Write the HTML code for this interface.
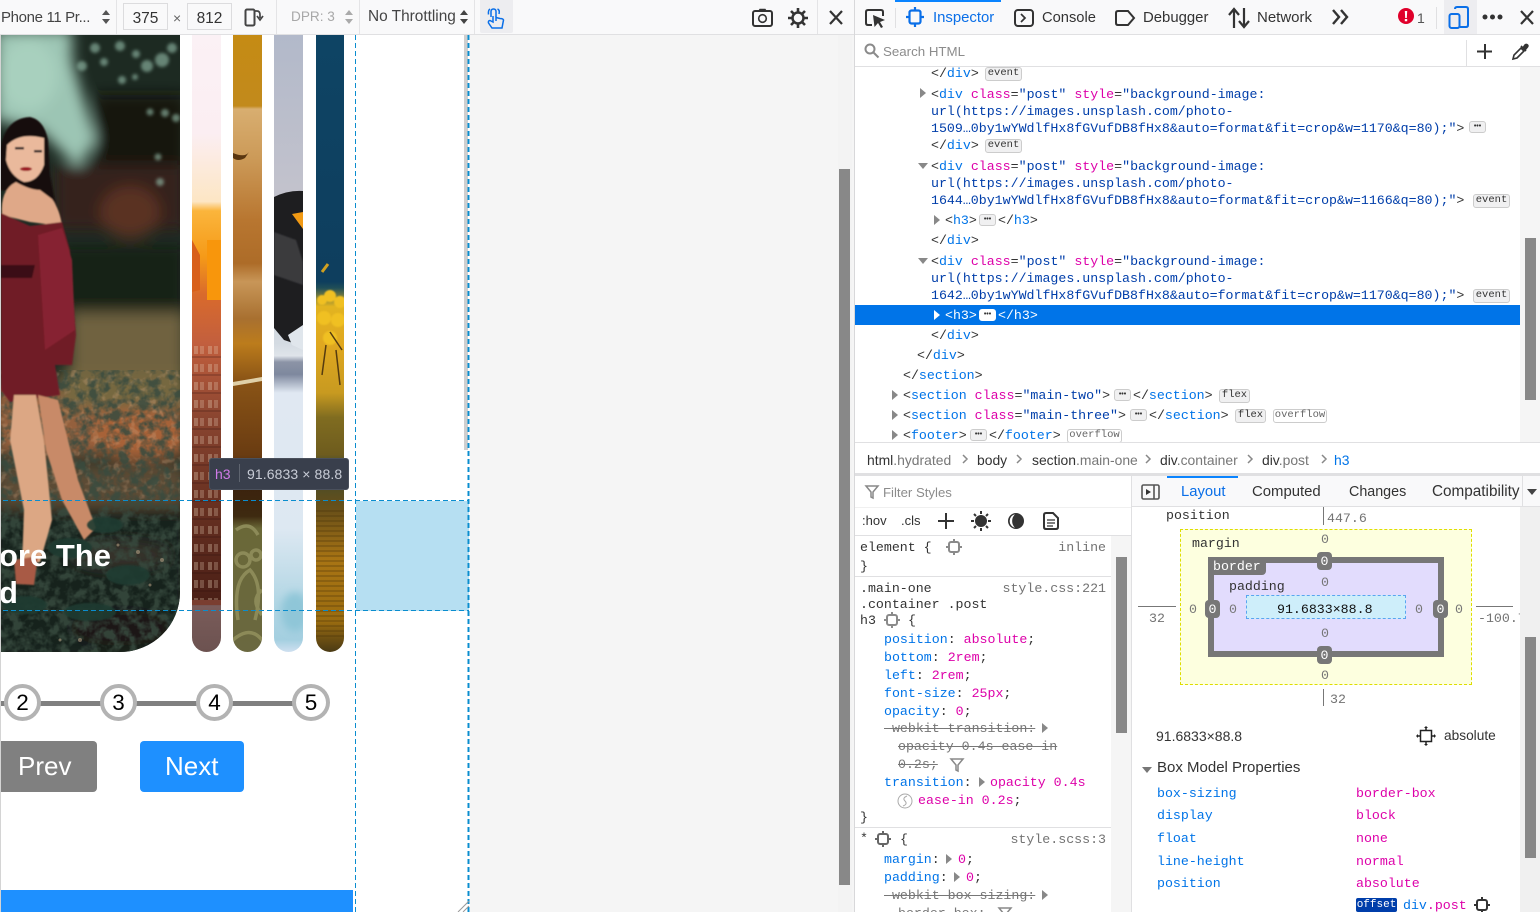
<!DOCTYPE html>
<html lang="en"><head><meta charset="utf-8"><title>Responsive Design Mode</title>
<style>
html,body{margin:0;padding:0;width:1540px;height:912px;overflow:hidden;background:#f5f5f5;font-family:"Liberation Sans",sans-serif;color:#222}
#root{position:absolute;left:0;top:0;width:1540px;height:912px;overflow:hidden;background:#f5f5f5}
.a{position:absolute}
.t{position:absolute;white-space:pre;font-family:"Liberation Sans",sans-serif;font-size:14.5px;line-height:20px;color:#333}
.m{position:absolute;white-space:pre;font-family:"Liberation Mono",monospace;font-size:13.28px;line-height:18px;color:#333;margin-top:1px}
.b{color:#0074e8}.p{color:#dd00a9}.d{color:#003eaa}.g{color:#737373}
.s{text-decoration:line-through;color:#777}
.bd{position:absolute;box-sizing:border-box;height:14px;border:1px solid #ccc;border-radius:3px;background:#f0f0f1;font:10.5px/11px "Liberation Mono",monospace;color:#333;text-align:center;white-space:pre;margin-top:1px}
.ov{background:#fff}
.el{width:17px;font:bold 7px/10px "Liberation Sans",sans-serif;letter-spacing:0;margin-top:0}
.z{position:absolute;width:16px;text-align:center;font:13.28px/16px "Liberation Mono",monospace;color:#777;margin-top:1px}
.bg0{position:absolute;width:15px;height:18px;border-radius:4px;background:#777;color:#fff;text-align:center;font:13.28px/19px "Liberation Mono",monospace}
svg{position:absolute;overflow:visible}
</style></head><body><div id="root">

<!-- LEFT: RDM viewport -->
<div class="a" style="left:0;top:0;width:854px;height:35px;background:#f9f9fa;border-bottom:1px solid #e0e0e2;box-sizing:border-box"></div>
<div class="a" style="left:0;top:35px;width:1px;height:877px;background:#d4d4d4"></div>
<div class="a" style="left:1px;top:35px;width:469px;height:877px;background:#fff"></div>

<!-- Photos -->
<svg width="470" height="912" viewBox="0 0 470 912" style="left:0;top:0">
<defs>
<filter id="f8" x="-30%" y="-30%" width="160%" height="160%"><feGaussianBlur stdDeviation="7"/></filter>
<filter id="f4" x="-30%" y="-30%" width="160%" height="160%"><feGaussianBlur stdDeviation="4"/></filter>
<filter id="f2" x="-50%" y="-50%" width="200%" height="200%"><feGaussianBlur stdDeviation="1.500"/></filter>
<filter id="f1" x="-30%" y="-30%" width="160%" height="160%"><feGaussianBlur stdDeviation=".8"/></filter>
<filter id="nd" x="0" y="0" width="100%" height="100%"><feTurbulence type="fractalNoise" baseFrequency=".1" numOctaves="3" seed="4"/><feColorMatrix values="0 0 0 0 .04  0 0 0 0 .07  0 0 0 0 .05  2.400 2.400 0 0 -2"/></filter>
<filter id="nl" x="0" y="0" width="100%" height="100%"><feTurbulence type="fractalNoise" baseFrequency=".14" numOctaves="2" seed="9"/><feColorMatrix values="0 0 0 0 .62  0 0 0 0 .38  0 0 0 0 .22  3 3 0 0 -3"/></filter>
<clipPath id="c0"><path d="M1 35H180V592A60 60 0 0 1 120 652H1Z"/></clipPath>
<clipPath id="c1"><path d="M192 35H221V637.500A14.500 14.500 0 0 1 192 637.500Z"/></clipPath>
<clipPath id="c2"><path d="M233 35H262V637.500A14.500 14.500 0 0 1 233 637.500Z"/></clipPath>
<clipPath id="c3"><path d="M274 35H303V637.500A14.500 14.500 0 0 1 274 637.500Z"/></clipPath>
<clipPath id="c4"><path d="M316 35H344V638A14 14 0 0 1 316 638Z"/></clipPath>
<linearGradient id="g1" x1="0" y1="0" x2="0" y2="1">
<stop offset="0" stop-color="#fbf1f5"/><stop offset=".16" stop-color="#fbeef2"/><stop offset=".27" stop-color="#fde6c4"/><stop offset=".285" stop-color="#fbb53c"/><stop offset=".36" stop-color="#f59a18"/><stop offset=".42" stop-color="#d96a2c"/><stop offset=".5" stop-color="#c25f3e"/><stop offset=".62" stop-color="#8a4530"/><stop offset=".75" stop-color="#6a3222"/><stop offset=".92" stop-color="#4a1f16"/><stop offset=".925" stop-color="#7a5c5a"/><stop offset="1" stop-color="#6c5250"/></linearGradient>
<linearGradient id="g2" x1="0" y1="0" x2="0" y2="1">
<stop offset="0" stop-color="#c58b14"/><stop offset=".115" stop-color="#c28a1c"/><stop offset=".12" stop-color="#d8ae70"/><stop offset=".2" stop-color="#cc9a58"/><stop offset=".3" stop-color="#b87630"/><stop offset=".37" stop-color="#ad6c28"/><stop offset=".4" stop-color="#c89658"/><stop offset=".46" stop-color="#a87030"/><stop offset=".5" stop-color="#bc7c1c"/><stop offset=".56" stop-color="#8a5416"/><stop offset=".68" stop-color="#6a3c12"/><stop offset=".72" stop-color="#3a200c"/><stop offset=".78" stop-color="#3e2a10"/><stop offset=".8" stop-color="#6a6838"/><stop offset="1" stop-color="#6a6840"/></linearGradient>
<linearGradient id="g3" x1="0" y1="0" x2="0" y2="1">
<stop offset="0" stop-color="#b2b9ca"/><stop offset=".25" stop-color="#c2c2cc"/><stop offset=".5" stop-color="#d4dbe2"/><stop offset=".52" stop-color="#dfe4ea"/><stop offset=".53" stop-color="#8c94a6"/><stop offset=".55" stop-color="#7e889e"/><stop offset=".58" stop-color="#e0e8f2"/><stop offset=".8" stop-color="#dde8f2"/><stop offset=".92" stop-color="#b2d6e4"/><stop offset=".98" stop-color="#a4cfe0"/><stop offset="1" stop-color="#cfe0f0"/></linearGradient>
<linearGradient id="g4" x1="0" y1="0" x2="0" y2="1">
<stop offset="0" stop-color="#0e4464"/><stop offset=".4" stop-color="#0e3e5e"/><stop offset=".41" stop-color="#204e58"/><stop offset=".44" stop-color="#e2b420"/><stop offset=".5" stop-color="#e0a820"/><stop offset=".58" stop-color="#c89a20"/><stop offset=".62" stop-color="#806c20"/><stop offset=".68" stop-color="#6e5c1e"/><stop offset=".7" stop-color="#3c4a30"/><stop offset=".77" stop-color="#6a5018"/><stop offset=".85" stop-color="#a87414"/><stop offset=".95" stop-color="#9a6c10"/><stop offset="1" stop-color="#4a3a14"/></linearGradient>
<pattern id="win" x="192" y="0" width="14" height="18" patternUnits="userSpaceOnUse"><rect x="2" y="4" width="4" height="8" fill="#e8d0b8" fill-opacity=".32"/><rect x="8" y="4" width="4" height="8" fill="#e8d0b8" fill-opacity=".26"/><rect x="0" y="14" width="14" height="2" fill="#2a0c08" fill-opacity=".2"/></pattern>
<pattern id="rip" width="28" height="5" patternUnits="userSpaceOnUse"><rect width="28" height="2" fill="#3e2c08" fill-opacity=".25"/></pattern>
</defs>

<g clip-path="url(#c0)">
<rect x="1" y="35" width="180" height="617" fill="#1d2a22"/>
<g filter="url(#f8)">
<path d="M-5 30H72V60L82 95L96 140L78 168L40 130L-5 120Z" fill="#9cc5b4"/>
<ellipse cx="28" cy="75" rx="30" ry="36" fill="#a8d0be"/>
<rect x="95" y="95" width="90" height="70" fill="#121210"/>
<rect x="55" y="165" width="130" height="65" fill="#35201a"/>
<ellipse cx="130" cy="212" rx="30" ry="26" fill="#5a3020"/>
<rect x="60" y="245" width="125" height="65" fill="#162419"/>
<rect x="70" y="312" width="115" height="70" fill="#6f6240"/>
<rect x="-5" y="385" width="190" height="70" fill="#94603e"/>
<rect x="60" y="372" width="125" height="36" fill="#766740"/>
<ellipse cx="140" cy="435" rx="50" ry="26" fill="#a86238"/>
<rect x="-5" y="465" width="190" height="45" fill="#5c4c34"/>
<rect x="-5" y="508" width="190" height="150" fill="#14221b"/>
<ellipse cx="120" cy="555" rx="50" ry="14" fill="#35302a"/>
<ellipse cx="120" cy="628" rx="50" ry="18" fill="#1f1812"/>
</g>
<g filter="url(#f2)" fill="#96c0ac" fill-opacity=".6">
<circle cx="95" cy="48" r="5"/><circle cx="82" cy="66" r="5"/><circle cx="104" cy="62" r="4"/><circle cx="120" cy="46" r="5"/><circle cx="136" cy="54" r="4"/><circle cx="147" cy="66" r="6"/><circle cx="162" cy="60" r="7"/><circle cx="172" cy="48" r="5"/><circle cx="122" cy="80" r="4"/><circle cx="135" cy="77" r="3"/><circle cx="150" cy="112" r="3.500"/><circle cx="165" cy="113" r="4"/><circle cx="158" cy="157" r="3.500"/><circle cx="160" cy="182" r="4"/><circle cx="176" cy="118" r="4"/>
</g>
<rect x="1" y="370" width="180" height="130" filter="url(#nl)" opacity=".3"/>
<rect x="1" y="370" width="180" height="282" filter="url(#nd)" opacity=".85"/>
<!-- woman -->
<g filter="url(#f1)">
<path d="M0 150Q5 118 30 117Q44 120 48 140L50 175L56 206L30 195L0 190Z" fill="#17100f"/>
<path d="M2 215Q0 190 16 182Q30 190 40 190L52 199Q60 210 62 226L30 222Z" fill="#dfa888"/>
<path d="M7 145Q20 132 44 138L44 165Q38 182 24 182Q10 176 6 160Z" fill="#eab99c"/>
<ellipse cx="26" cy="169" rx="6" ry="2" fill="#9c1622"/>
<rect x="15" y="147" width="9" height="2.500" fill="#2a2226"/><rect x="34" y="150" width="8" height="2.500" fill="#2a2226"/>
<path d="M1 213L30 226L62 222L70 250L76 335L72 365H55L60 395L10 402L1 390Z" fill="#701a26"/>
<path d="M38 235L62 228L72 260L75 330L45 350Z" fill="#862230"/>
<path d="M1 265H35L32 278H1Z" fill="#3a0d14"/>
<path d="M14 395H36L44 440L52 520L40 562L22 565L24 510L10 440Z" fill="#dca784"/>
<path d="M38 395L58 400L78 480L96 528L84 540L62 500L46 450Z" fill="#c88a68"/>
<path d="M14 560L38 556L34 585L16 584Z" fill="#a85a44"/>
</g>
<g filter="url(#f1)" fill="#1f3a30" fill-opacity=".9">
<ellipse cx="105" cy="525" rx="18" ry="8"/><ellipse cx="70" cy="548" rx="22" ry="10"/><ellipse cx="128" cy="575" rx="22" ry="10"/><ellipse cx="25" cy="605" rx="22" ry="9"/><ellipse cx="90" cy="612" rx="26" ry="9"/>
</g>
<g fill="#bda588" fill-opacity=".55">
<circle cx="118" cy="545" r="1.500"/><circle cx="138" cy="552" r="2"/><circle cx="150" cy="585" r="1.500"/><circle cx="80" cy="640" r="2"/><circle cx="60" cy="640" r="1.500"/><circle cx="162" cy="560" r="2"/>
</g>
</g>

<g clip-path="url(#c1)">
<rect x="192" y="35" width="29" height="617" fill="url(#g1)"/>
<rect x="192" y="340" width="29" height="260" fill="url(#win)"/>
<path d="M192 240L200 255L200 290L192 292Z" fill="#d8601c"/>
<path d="M207 240H221V300H207Z" fill="#f8960c"/>
<rect x="192" y="600" width="29" height="5" fill="#7a3e30"/>
</g>
<g clip-path="url(#c2)">
<rect x="233" y="35" width="29" height="617" fill="url(#g2)"/>
<path d="M233 153Q245 158 249 152L245 158Q238 162 233 158Z" fill="#5a3610"/>
<path d="M233 382L262 377V381L233 386Z" fill="#e0d0a8"/>
<g fill="none" stroke="#8c8a58" stroke-width="3.500">
<path d="M236 530Q250 520 258 535"/><circle cx="243" cy="560" r="7"/><circle cx="256" cy="555" r="5"/><path d="M238 620Q232 580 250 570Q264 585 255 620"/><path d="M233 640Q250 625 262 640"/><path d="M262 590Q250 600 262 615"/>
</g>
</g>
<g clip-path="url(#c3)">
<rect x="274" y="35" width="29" height="617" fill="url(#g3)"/>
<path d="M274 197Q288 190 303 191V335L298 345L290 342L284 340L274 328Z" fill="#1e1e20"/>
<path d="M292 214L303 229V212Z" fill="#f29a14"/>
<path d="M274 232L296 240L303 262V285L274 275Z" fill="#3a3a3e" filter="url(#f1)"/>
<path d="M288 335L303 325V350L292 345Z" fill="#e0e6ec"/>
<ellipse cx="295" cy="612" rx="14" ry="20" fill="#8fc6d8" filter="url(#f4)"/>
</g>
<g clip-path="url(#c4)">
<rect x="316" y="35" width="28" height="617" fill="url(#g4)"/>
<g fill="#f0c020" filter="url(#f1)"><circle cx="322" cy="300" r="5"/><circle cx="330" cy="296" r="6"/><circle cx="340" cy="302" r="6"/><circle cx="324" cy="318" r="7"/><circle cx="338" cy="320" r="7"/><circle cx="330" cy="338" r="7"/></g>
<path d="M330 332L342 350M326 345L322 375M336 350L340 385" stroke="#553b10" stroke-width="1.500"/>
<path d="M322 272L328 264" stroke="#d0a020" stroke-width="3"/>
<rect x="316" y="510" width="28" height="130" fill="url(#rip)"/>
</g>
</svg>

<!-- h3 text -->
<div class="a" style="left:1px;top:537px;width:180px;height:80px;overflow:hidden"><div style="position:absolute;left:-2px;top:0;font:bold 31px/37px 'Liberation Sans',sans-serif;color:#fff;white-space:pre">ore The
d</div></div>

<!-- Highlighter -->
<div class="a" style="left:356px;top:501px;width:113px;height:110px;background:#b6dff2"></div>
<svg width="470" height="912" style="left:0;top:0">
<path d="M3 500.500H469M3 610.500H469" stroke="#0a8dcf" stroke-width="1" stroke-dasharray="5 3" fill="none"/>
<path d="M355.500 35V912" stroke="#0a8dcf" stroke-width="1" stroke-dasharray="5 3" fill="none"/>
</svg>

<!-- Stepper -->
<div class="a" style="left:1px;top:701px;width:310px;height:5px;background:#808080"></div>
<div class="a" style="left:4px;top:684px;width:37px;height:37px;box-sizing:border-box;border:4px solid #b3b3b3;border-radius:50%;background:#fff;text-align:center;font:22.500px/30px 'Liberation Sans',sans-serif;color:#000">2</div>
<div class="a" style="left:100px;top:684px;width:37px;height:37px;box-sizing:border-box;border:4px solid #b3b3b3;border-radius:50%;background:#fff;text-align:center;font:22.500px/30px 'Liberation Sans',sans-serif;color:#000">3</div>
<div class="a" style="left:196px;top:684px;width:37px;height:37px;box-sizing:border-box;border:4px solid #b3b3b3;border-radius:50%;background:#fff;text-align:center;font:22.500px/30px 'Liberation Sans',sans-serif;color:#000">4</div>
<div class="a" style="left:292px;top:684px;width:38px;height:37px;box-sizing:border-box;border:4px solid #b3b3b3;border-radius:50%;background:#fff;text-align:center;font:22.500px/30px 'Liberation Sans',sans-serif;color:#000">5</div>
<!-- Buttons -->
<div class="a" style="left:1px;top:741px;width:96px;height:51px;background:#808080;border-radius:0 4px 4px 0;color:#fff;font:26px/50px 'Liberation Sans',sans-serif;text-indent:17px">Prev</div>
<div class="a" style="left:140px;top:741px;width:104px;height:51px;background:#1e90ff;border-radius:4px;color:#fff;font:26px/50px 'Liberation Sans',sans-serif;text-indent:25px">Next</div>
<div class="a" style="left:1px;top:890px;width:352px;height:22px;background:#1e90ff"></div>

<!-- viewport scrollbar + blue dashed edge -->
<div class="a" style="left:464px;top:35px;width:4px;height:415px;background:#cfcfcf"></div>
<svg width="470" height="912" style="left:0;top:0"><path d="M468.500 35V912" stroke="#0a8dcf" stroke-width="2" stroke-dasharray="5 3" fill="none"/>
<path d="M458 912L469 901M463 912L469 906" stroke="#999" stroke-width="1"/></svg>

<!-- tooltip -->
<div class="a" style="left:209px;top:458px;width:140px;height:32px;background:#393f4c;border-radius:3px;box-sizing:border-box;border:1px solid #4a505c"></div>
<div class="t" style="left:215px;top:464px;color:#d07be8;font-size:14px">h3</div>
<div class="a" style="left:239px;top:464px;width:1px;height:18px;background:#5f6570"></div>
<div class="t" style="left:247px;top:464px;color:#c8ccd6;font-size:14px;letter-spacing:.1px">91.6833 × 88.8</div>

<!-- RDM toolbar -->
<div class="t" style="left:1px;top:8px;font-size:15px;letter-spacing:-.35px;color:#444">Phone 11 Pr...</div>
<svg width="12" height="16" style="left:100px;top:9px"><path d="M6 1L10 6H2ZM6 15L10 10H2Z" fill="#555"/></svg>
<div class="a" style="left:116px;top:0;width:1px;height:34px;background:#e4e4e6"></div>
<div class="a" style="left:123px;top:3px;width:45px;height:27px;box-sizing:border-box;border:1px solid #dcdcde;background:#f9f9fa;text-align:center;font:15.500px/29px 'Liberation Sans',sans-serif;color:#333">375</div>
<div class="t" style="left:173px;top:8px;font-size:14px;color:#666">×</div>
<div class="a" style="left:187px;top:3px;width:45px;height:27px;box-sizing:border-box;border:1px solid #dcdcde;background:#f9f9fa;text-align:center;font:15.500px/29px 'Liberation Sans',sans-serif;color:#333">812</div>
<svg width="22" height="20" style="left:244px;top:8px"><rect x="1.500" y="1.500" width="9" height="16" rx="1.500" fill="none" stroke="#444" stroke-width="2"/><path d="M10 3H13Q16 3 16 7V10M13 8L16 12L19 8" fill="none" stroke="#444" stroke-width="1.700"/></svg>
<div class="a" style="left:276px;top:0;width:1px;height:34px;background:#e4e4e6"></div>
<div class="t" style="left:291px;top:7px;font-size:13.600px;color:#a8a8a8">DPR: 3</div>
<svg width="12" height="16" style="left:343px;top:9px"><path d="M6 1L10 6H2ZM6 15L10 10H2Z" fill="#aaa"/></svg>
<div class="a" style="left:359px;top:0;width:1px;height:34px;background:#e4e4e6"></div>
<div class="t" style="left:368px;top:7px;font-size:15.400px;color:#444">No Throttling</div>
<svg width="12" height="16" style="left:458px;top:9px"><path d="M6 1L10 6H2ZM6 15L10 10H2Z" fill="#444"/></svg>
<div class="a" style="left:474px;top:0;width:1px;height:34px;background:#e4e4e6"></div>
<div class="a" style="left:480px;top:0;width:33px;height:33px;background:#ededf0;border-radius:0 0 2px 2px"></div>
<svg width="18" height="22" style="left:487px;top:8px" fill="none" stroke="#0a6fe8" stroke-width="1.500"><path d="M4 9V3.500Q4 1 6.500 1Q9 1 9 3.500V9"/><path d="M1.500 6.500Q1 2 3 1M10.500 1Q13 2 12 6"/><path d="M6 8V14L3 12.500Q1 12.500 1.500 15L5 20H15L16.500 12Q16 10.500 13 10.500L9 9.500V13"/></svg>

<!-- RDM right icons -->
<svg width="22" height="20" style="left:752px;top:8px" fill="none" stroke="#333" stroke-width="2"><rect x="1" y="3" width="19" height="15" rx="2"/><path d="M7 3L8 1.500H13L14 3" stroke-width="1.500"/><circle cx="10.500" cy="10.500" r="3.800" stroke-width="1.600"/></svg>
<svg width="22" height="22" style="left:787px;top:7px" fill="none" stroke="#333"><circle cx="11" cy="11" r="5.500" stroke-width="2.500"/><path d="M11 1V5M11 17V21M1 11H5M17 11H21M4 4L7 7M15 15L18 18M18 4L15 7M7 15L4 18" stroke-width="2.600"/></svg>
<div class="a" style="left:817px;top:0;width:1px;height:34px;background:#e4e4e6"></div>
<svg width="16" height="16" style="left:828px;top:10px"><path d="M2 1L14 14M14 1L2 14" stroke="#333" stroke-width="2.200" fill="none"/></svg>

<!-- page scrollbar -->
<div class="a" style="left:838px;top:35px;width:14px;height:877px;background:#f3f3f3"></div>
<div class="a" style="left:839px;top:169px;width:11px;height:716px;background:#888"></div>

<!-- DEVTOOLS -->
<div class="a" style="left:854px;top:0;width:686px;height:912px;background:#fff;border-left:1px solid #d8d8da;box-sizing:border-box"></div>
<div class="a" style="left:855px;top:0;width:685px;height:34px;background:#f9f9fa;border-bottom:1px solid #e0e0e2"></div>
<svg width="22" height="20" style="left:864px;top:8px" fill="none" stroke="#333" stroke-width="2"><path d="M8 17H4Q2 17 2 15V4Q2 2 4 2H17Q19 2 19 4V8"/><path d="M9 7L21 12L16 14L19 19L17 20L14 15L10.500 19Z" fill="#333" stroke="none"/></svg>
<div class="a" style="left:895px;top:8px;width:1px;height:20px;background:#e0e0e2"></div>
<div class="a" style="left:895px;top:0;width:106px;height:2px;background:#0a84ff"></div>
<svg width="18" height="20" style="left:906px;top:7px" fill="none" stroke="#0a6fe8" stroke-width="2.200"><rect x="3.500" y="3.500" width="11" height="13" rx="2"/><path d="M9 0V3.500M9 16.500V20M0 10H3.500M14.500 10H18"/></svg>
<div class="t" style="left:933px;top:8px;color:#0a6fe8;font-size:14.900px">Inspector</div>
<svg width="22" height="20" style="left:1013px;top:8px" fill="none" stroke="#333" stroke-width="2"><rect x="2" y="2" width="18" height="16" rx="3"/><path d="M8 6L12 10L8 14" stroke-width="1.700"/></svg>
<div class="t" style="left:1042px;top:8px;font-size:14.700px">Console</div>
<svg width="22" height="20" style="left:1114px;top:8px" fill="none" stroke="#333" stroke-width="2"><path d="M4 3H14L20 10L14 17H4Q2 17 2 15V5Q2 3 4 3Z"/></svg>
<div class="t" style="left:1143px;top:8px;font-size:14.900px">Debugger</div>
<svg width="22" height="22" style="left:1228px;top:7px" fill="none" stroke="#333" stroke-width="2.200"><path d="M6 21V3M1 8L6 2L11 8M16 1V19M11 14L16 20L21 14"/></svg>
<div class="t" style="left:1257px;top:8px;font-size:15px">Network</div>
<svg width="18" height="16" style="left:1332px;top:9px" fill="none" stroke="#333" stroke-width="2.400"><path d="M1 1L7 8L1 15M9 1L15 8L9 15"/></svg>
<svg width="16" height="16" style="left:1398px;top:8px"><circle cx="8" cy="8" r="8" fill="#e0002b"/><path d="M6.800 3H9.200L8.800 10H7.200ZM6.800 11H9.200V13.200H6.800Z" fill="#fff"/></svg>
<div class="t" style="left:1417px;top:8px;font-size:14px;color:#555">1</div>
<div class="a" style="left:1436px;top:7px;width:1px;height:22px;background:#e0e0e2"></div>
<div class="a" style="left:1444px;top:0;width:33px;height:34px;background:#ededf0"></div>
<svg width="22" height="24" style="left:1448px;top:6px" fill="none" stroke="#0a6fe8" stroke-width="2"><path d="M7 3Q7 1 9 1H18Q20 1 20 3V19Q20 21 18 21H12"/><rect x="1.500" y="8" width="10" height="14" rx="2"/></svg>
<svg width="22" height="6" style="left:1482px;top:14px"><circle cx="3" cy="3" r="2.500" fill="#333"/><circle cx="10.500" cy="3" r="2.500" fill="#333"/><circle cx="18" cy="3" r="2.500" fill="#333"/></svg>
<svg width="16" height="16" style="left:1519px;top:10px"><path d="M2 1L14 14M14 1L2 14" stroke="#333" stroke-width="2.200" fill="none"/></svg>

<!-- search row -->
<svg width="16" height="16" style="left:864px;top:43px" fill="none" stroke="#8a8a8a" stroke-width="2"><circle cx="6" cy="6" r="4.500"/><path d="M9.500 9.500L14.500 14.500"/></svg>
<div class="t" style="left:883px;top:42px;font-size:13.300px;color:#8c8c8c">Search HTML</div>
<div class="a" style="left:1466px;top:40px;width:1px;height:26px;background:#e0e0e2"></div>
<svg width="16" height="16" style="left:1477px;top:44px"><path d="M8 0V15M0 7.500H15" stroke="#333" stroke-width="2"/></svg>
<svg width="18" height="18" style="left:1511px;top:43px" fill="none" stroke="#333" stroke-width="1.600"><path d="M2 16L3 12L10 5L13 8L6 15Z"/><path d="M10 3L15 8M12 5L14 2Q15.500 1 16.500 2Q17.500 3 16 4.500L14 7" fill="#333"/></svg>
<div class="a" style="left:855px;top:66px;width:685px;height:1px;background:#e0e0e2"></div>

<!-- MARKUP -->
<div class="a" style="left:855px;top:67px;width:665px;height:375px;overflow:hidden;background:#fff" id="mk">
<div class="a" style="left:0;top:238px;width:665px;height:20px;background:#0074e8"></div>

<div class="m" style="left:76px;top:-3px"><span>&lt;/</span><span class="b">div</span>&gt;</div><div class="bd" style="left:130px;top:-1px;width:37px">event</div>

<svg width="8" height="12" style="left:64px;top:20px"><path d="M1 1L7 6L1 11Z" fill="#888"/></svg>
<div class="m" style="left:76px;top:18px">&lt;<span class="b">div</span> <span class="p">class</span>=<span class="d">"post"</span> <span class="p">style</span>=<span class="d">"background-image:</span></div>
<div class="m d" style="left:76px;top:35px">url(https://images.unsplash.com/photo-</div>
<div class="m" style="left:76px;top:52px"><span class="d">1509…0by1wYWdlfHx8fGVufDB8fHx8&amp;auto=format&amp;fit=crop&amp;w=1170&amp;q=80);"</span>&gt;</div>
<div class="bd el" style="left:614px;top:54px;height:12px">•••</div>
<div class="m" style="left:76px;top:69px">&lt;/<span class="b">div</span>&gt;</div><div class="bd" style="left:130px;top:71px;width:37px">event</div>

<svg width="12" height="8" style="left:62px;top:95px"><path d="M1 1H11L6 7Z" fill="#888"/></svg>
<div class="m" style="left:76px;top:90px">&lt;<span class="b">div</span> <span class="p">class</span>=<span class="d">"post"</span> <span class="p">style</span>=<span class="d">"background-image:</span></div>
<div class="m d" style="left:76px;top:107px">url(https://images.unsplash.com/photo-</div>
<div class="m" style="left:76px;top:124px"><span class="d">1644…0by1wYWdlfHx8fGVufDB8fHx8&amp;auto=format&amp;fit=crop&amp;w=1166&amp;q=80);"</span>&gt;</div>
<div class="bd" style="left:618px;top:126px;width:37px">event</div>
<svg width="8" height="12" style="left:78px;top:147px"><path d="M1 1L7 6L1 11Z" fill="#888"/></svg>
<div class="m" style="left:90px;top:144px">&lt;<span class="b">h3</span>&gt;</div>
<div class="bd el" style="left:124px;top:147px;height:12px">•••</div>
<div class="m" style="left:143px;top:144px">&lt;/<span class="b">h3</span>&gt;</div>
<div class="m" style="left:76px;top:164px">&lt;/<span class="b">div</span>&gt;</div>

<svg width="12" height="8" style="left:62px;top:190px"><path d="M1 1H11L6 7Z" fill="#888"/></svg>
<div class="m" style="left:76px;top:185px">&lt;<span class="b">div</span> <span class="p">class</span>=<span class="d">"post"</span> <span class="p">style</span>=<span class="d">"background-image:</span></div>
<div class="m d" style="left:76px;top:202px">url(https://images.unsplash.com/photo-</div>
<div class="m" style="left:76px;top:219px"><span class="d">1642…0by1wYWdlfHx8fGVufDB8fHx8&amp;auto=format&amp;fit=crop&amp;w=1170&amp;q=80);"</span>&gt;</div>
<div class="bd" style="left:618px;top:221px;width:37px">event</div>

<svg width="8" height="12" style="left:78px;top:242px"><path d="M1 1L7 6L1 11Z" fill="#fff"/></svg>
<div class="m" style="left:90px;top:239px;color:#fff">&lt;h3&gt;</div>
<div class="bd el" style="left:124px;top:242px;height:12px;background:#fff;border-color:#fff">•••</div>
<div class="m" style="left:143px;top:239px;color:#fff">&lt;/h3&gt;</div>

<div class="m" style="left:76px;top:259px">&lt;/<span class="b">div</span>&gt;</div>
<div class="m" style="left:62px;top:279px">&lt;/<span class="b">div</span>&gt;</div>
<div class="m" style="left:48px;top:299px">&lt;/<span class="b">section</span>&gt;</div>

<svg width="8" height="12" style="left:36px;top:322px"><path d="M1 1L7 6L1 11Z" fill="#888"/></svg>
<div class="m" style="left:48px;top:319px">&lt;<span class="b">section</span> <span class="p">class</span>=<span class="d">"main-two"</span>&gt;</div>
<div class="bd el" style="left:259px;top:322px;height:12px">•••</div>
<div class="m" style="left:278px;top:319px">&lt;/<span class="b">section</span>&gt;</div>
<div class="bd" style="left:364px;top:321px;width:31px">flex</div>

<svg width="8" height="12" style="left:36px;top:342px"><path d="M1 1L7 6L1 11Z" fill="#888"/></svg>
<div class="m" style="left:48px;top:339px">&lt;<span class="b">section</span> <span class="p">class</span>=<span class="d">"main-three"</span>&gt;</div>
<div class="bd el" style="left:275px;top:342px;height:12px">•••</div>
<div class="m" style="left:294px;top:339px">&lt;/<span class="b">section</span>&gt;</div>
<div class="bd" style="left:380px;top:341px;width:31px">flex</div>
<div class="bd ov" style="left:418px;top:341px;width:54px;color:#666">overflow</div>

<svg width="8" height="12" style="left:36px;top:362px"><path d="M1 1L7 6L1 11Z" fill="#888"/></svg>
<div class="m" style="left:48px;top:359px">&lt;<span class="b">footer</span>&gt;</div>
<div class="bd el" style="left:115px;top:362px;height:12px">•••</div>
<div class="m" style="left:134px;top:359px">&lt;/<span class="b">footer</span>&gt;</div>
<div class="bd ov" style="left:212px;top:361px;width:55px;color:#666">overflow</div>
</div>
<div class="a" style="left:1520px;top:67px;width:20px;height:375px;background:#f5f5f5"></div>
<div class="a" style="left:1525px;top:238px;width:11px;height:162px;background:#888"></div>

<!-- breadcrumb -->
<div class="a" style="left:855px;top:442px;width:685px;height:31px;background:#fff;border-top:1px solid #e0e0e2;box-sizing:border-box"></div>
<div class="a" style="left:855px;top:473px;width:685px;height:3px;background:#e0e0e2"></div>
<div class="t" style="left:867px;top:450px;font-size:13.900px;color:#333">html<span style="color:#777">.hydrated</span></div>
<div class="t" style="left:977px;top:450px;font-size:13.900px">body</div>
<div class="t" style="left:1032px;top:450px;font-size:13.900px">section<span style="color:#777">.main-one</span></div>
<div class="t" style="left:1160px;top:450px;font-size:13.900px">div<span style="color:#777">.container</span></div>
<div class="t" style="left:1262px;top:450px;font-size:13.900px">div<span style="color:#777">.post</span></div>
<div class="t" style="left:1334px;top:450px;font-size:13.900px;color:#0074e8">h3</div>
<svg width="400" height="12" style="left:960px;top:454px" fill="none" stroke="#888" stroke-width="1.500"><path d="M3 1L7 5L3 9M57 1L61 5L57 9M186 1L190 5L186 9M288 1L292 5L288 9M362 1L366 5L362 9"/></svg>

<!-- RULES -->
<svg width="14" height="14" style="left:865px;top:485px" fill="none" stroke="#888" stroke-width="1.500"><path d="M1 1H13L8 7V13L6 12V7Z"/></svg>
<div class="t" style="left:883px;top:483px;font-size:13.200px;color:#8c8c8c">Filter Styles</div>
<div class="a" style="left:855px;top:507px;width:277px;height:1px;background:#f0f0f0"></div>
<div class="t" style="left:862px;top:511px;font-size:13px">:hov</div>
<div class="t" style="left:901px;top:511px;font-size:13px">.cls</div>
<svg width="16" height="16" style="left:938px;top:513px"><path d="M8 0V16M0 8H16" stroke="#333" stroke-width="2"/></svg>
<svg width="20" height="20" style="left:971px;top:511px" fill="none" stroke="#333"><circle cx="10" cy="10" r="5.500" fill="#333"/><path d="M10 0V3M10 17V20M0 10H3M17 10H20M3 3L5 5M15 15L17 17M17 3L15 5M5 15L3 17" stroke-width="2"/></svg>
<svg width="20" height="20" style="left:1006px;top:511px"><circle cx="10" cy="10" r="8" fill="#333"/><path d="M9 3.200A7 7 0 0 0 9 16.800A9.500 9.500 0 0 1 9 3.200Z" fill="#fff"/></svg>
<svg width="16" height="18" style="left:1043px;top:512px" fill="none" stroke="#333" stroke-width="2"><path d="M3 1H10L15 6V15Q15 17 13 17H3Q1 17 1 15V3Q1 1 3 1Z"/><path d="M4 8H12M4 11H12M4 14H10" stroke-width="1.200"/></svg>
<div class="a" style="left:855px;top:535px;width:277px;height:1px;background:#e0e0e2"></div>

<div class="m" style="left:860px;top:538px">element {</div>
<svg width="16" height="16" style="left:946px;top:539px" fill="none" stroke="#8a8a8a" stroke-width="2"><rect x="3" y="3" width="10" height="10" rx="2"/><path d="M8 0V3M8 13V16M0 8H3M13 8H16"/></svg>
<div class="m g" style="right:434px;top:538px">inline</div>
<div class="m" style="left:860px;top:557px">}</div>
<div class="a" style="left:855px;top:576px;width:256px;height:1px;background:#e0e0e2"></div>
<div class="m" style="left:860px;top:579px">.main-one</div>
<div class="m g" style="right:434px;top:579px">style.css:221</div>
<div class="m" style="left:860px;top:595px">.container .post</div>
<div class="m" style="left:860px;top:611px">h3</div>
<svg width="16" height="16" style="left:884px;top:612px" fill="none" stroke="#8a8a8a" stroke-width="2"><rect x="3" y="3" width="10" height="10" rx="2"/><path d="M8 0V3M8 13V16M0 8H3M13 8H16"/></svg>
<div class="m" style="left:908px;top:611px">{</div>
<div class="m" style="left:884px;top:630px"><span class="b">position</span>: <span class="p">absolute</span>;</div>
<div class="m" style="left:884px;top:648px"><span class="b">bottom</span>: <span class="p">2rem</span>;</div>
<div class="m" style="left:884px;top:666px"><span class="b">left</span>: <span class="p">2rem</span>;</div>
<div class="m" style="left:884px;top:684px"><span class="b">font-size</span>: <span class="p">25px</span>;</div>
<div class="m" style="left:884px;top:702px"><span class="b">opacity</span>: <span class="p">0</span>;</div>
<div class="m s" style="left:884px;top:719px">-webkit-transition:</div>
<svg width="8" height="12" style="left:1041px;top:722px"><path d="M1 1L7 6L1 11Z" fill="#888"/></svg>
<div class="m s" style="left:898px;top:737px">opacity 0.4s ease-in</div>
<div class="m s" style="left:898px;top:755px">0.2s;</div>
<svg width="14" height="14" style="left:950px;top:758px" fill="none" stroke="#888" stroke-width="1.500"><path d="M1 1H13L8 7V13L6 12V7Z"/></svg>
<div class="m" style="left:884px;top:773px"><span class="b">transition</span>:</div>
<svg width="8" height="12" style="left:978px;top:776px"><path d="M1 1L7 6L1 11Z" fill="#888"/></svg>
<div class="m p" style="left:990px;top:773px">opacity 0.4s</div>
<svg width="16" height="16" style="left:897px;top:793px" fill="none" stroke="#aaa" stroke-width="1"><circle cx="8" cy="8" r="7"/><path d="M10 3Q5 5 8 8Q11 11 6 13"/></svg>
<div class="m" style="left:918px;top:791px"><span class="p">ease-in 0.2s</span>;</div>
<div class="m" style="left:860px;top:808px">}</div>
<div class="a" style="left:855px;top:827px;width:256px;height:1px;background:#e0e0e2"></div>
<div class="m" style="left:860px;top:829px">*</div>
<svg width="16" height="16" style="left:875px;top:831px" fill="none" stroke="#666" stroke-width="2"><rect x="3" y="3" width="10" height="10" rx="2"/><path d="M8 0V3M8 13V16M0 8H3M13 8H16"/></svg>
<div class="m" style="left:900px;top:830px">{</div>
<div class="m g" style="right:434px;top:830px">style.scss:3</div>
<div class="m" style="left:884px;top:850px"><span class="b">margin</span>:</div>
<svg width="8" height="12" style="left:945px;top:853px"><path d="M1 1L7 6L1 11Z" fill="#888"/></svg>
<div class="m" style="left:958px;top:850px"><span class="p">0</span>;</div>
<div class="m" style="left:884px;top:868px"><span class="b">padding</span>:</div>
<svg width="8" height="12" style="left:953px;top:871px"><path d="M1 1L7 6L1 11Z" fill="#888"/></svg>
<div class="m" style="left:966px;top:868px"><span class="p">0</span>;</div>
<div class="m s" style="left:884px;top:886px">-webkit-box-sizing:</div>
<svg width="8" height="12" style="left:1041px;top:889px"><path d="M1 1L7 6L1 11Z" fill="#888"/></svg>
<div class="m s" style="left:898px;top:904px">border-box;</div>
<svg width="14" height="14" style="left:998px;top:907px" fill="none" stroke="#888" stroke-width="1.500"><path d="M1 1H13L8 7V13L6 12V7Z"/></svg>

<div class="a" style="left:1111px;top:536px;width:20px;height:376px;background:#f5f5f5"></div>
<div class="a" style="left:1116px;top:557px;width:11px;height:176px;background:#888"></div>
<div class="a" style="left:1131px;top:476px;width:1px;height:436px;background:#e0e0e2"></div>

<!-- LAYOUT sidebar -->
<div class="a" style="left:1132px;top:476px;width:408px;height:30px;background:#f9f9fa;border-bottom:1px solid #e0e0e2"></div>
<div class="a" style="left:1167px;top:476px;width:71px;height:2px;background:#0a84ff"></div>
<svg width="20" height="16" style="left:1141px;top:484px" fill="none" stroke="#555" stroke-width="1.600"><rect x="1" y="1" width="17" height="14" rx="1.500"/><path d="M13 1V15"/><path d="M5 5L10 8L5 11Z" fill="#333" stroke="none"/></svg>
<div class="t" style="left:1181px;top:482px;color:#0a6fe8;font-size:14.800px">Layout</div>
<div class="t" style="left:1252px;top:482px;font-size:14.900px">Computed</div>
<div class="t" style="left:1349px;top:482px;font-size:14.300px">Changes</div>
<div class="t" style="left:1432px;top:482px;font-size:15.300px">Compatibility</div>
<div class="a" style="left:1522px;top:476px;width:1px;height:30px;background:#e0e0e2"></div>
<svg width="10" height="6" style="left:1527px;top:489px"><path d="M0 0H10L5 6Z" fill="#444"/></svg>

<div class="a" style="left:1132px;top:507px;width:388px;height:405px;overflow:hidden">
 <div class="m" style="left:34px;top:-1px">position</div>
 <div class="a" style="left:191px;top:0;width:1px;height:18px;background:#777"></div>
 <div class="m g" style="left:195px;top:2px">447.6</div>
 <div class="a" style="left:48px;top:22px;width:292px;height:156px;box-sizing:border-box;background:#fdffdf;border:1px dashed #dede00"></div>
 <div class="m" style="left:60px;top:27px">margin</div>
 <div class="z" style="left:185px;top:24px">0</div>
 <div class="a" style="left:76px;top:50px;width:236px;height:100px;box-sizing:border-box;background:#e2dcfd;border:6px solid #777"></div>
 <div class="a" style="left:77px;top:52px;width:57px;height:16px;background:#777;border-radius:0 0 4px 0;color:#fff;font:13.28px/16px 'Liberation Mono',monospace;text-indent:4px">border</div>
 <div class="bg0" style="left:185px;top:45px">0</div>
 <div class="m" style="left:97px;top:70px">padding</div>
 <div class="z" style="left:185px;top:67px">0</div>
 <div class="a" style="left:114px;top:88px;width:160px;height:24px;box-sizing:border-box;background:#ceeefa;border:1px dashed #5aa5f0"></div>
 <div class="m" style="left:145px;top:93px;color:#111">91.6833×88.8</div>
 <div class="z" style="left:93px;top:94px">0</div>
 <div class="z" style="left:279px;top:94px">0</div>
 <div class="z" style="left:185px;top:118px">0</div>
 <div class="bg0" style="left:185px;top:139px">0</div>
 <div class="z" style="left:185px;top:160px">0</div>
 <div class="z" style="left:53px;top:94px">0</div>
 <div class="bg0" style="left:73px;top:93px">0</div>
 <div class="bg0" style="left:301px;top:93px">0</div>
 <div class="z" style="left:319px;top:94px">0</div>
 <div class="a" style="left:6px;top:99px;width:38px;height:1px;background:#777"></div>
 <div class="m g" style="left:17px;top:102px">32</div>
 <div class="a" style="left:344px;top:99px;width:37px;height:1px;background:#777"></div>
 <div class="m g" style="left:346px;top:102px">-100.7</div>
 <div class="a" style="left:191px;top:182px;width:1px;height:17px;background:#777"></div>
 <div class="m g" style="left:198px;top:183px">32</div>

 <div class="t" style="left:24px;top:219px;font-size:14px">91.6833×88.8</div>
 <svg width="20" height="20" style="left:284px;top:219px" fill="none" stroke="#222" stroke-width="1.500"><rect x="4.500" y="4.500" width="11" height="11"/><path d="M10 1V5M10 15V19M1 10H5M15 10H19" stroke-width="1.500"/><path d="M8 2L10 0L12 2ZM8 18L10 20L12 18ZM2 8L0 10L2 12ZM18 8L20 10L18 12Z" fill="#222" stroke="none"/></svg>
 <div class="t" style="left:312px;top:219px;font-size:13.700px">absolute</div>
 <svg width="10" height="8" style="left:10px;top:259px"><path d="M0 1H10L5 7Z" fill="#777"/></svg>
 <div class="t" style="left:25px;top:251px;font-size:15px">Box Model Properties</div>
 <div class="m b" style="left:25px;top:277px">box-sizing</div><div class="m p" style="left:224px;top:277px">border-box</div>
 <div class="m b" style="left:25px;top:299px">display</div><div class="m p" style="left:224px;top:299px">block</div>
 <div class="m b" style="left:25px;top:322px">float</div><div class="m p" style="left:224px;top:322px">none</div>
 <div class="m b" style="left:25px;top:345px">line-height</div><div class="m p" style="left:224px;top:345px">normal</div>
 <div class="m b" style="left:25px;top:367px">position</div><div class="m p" style="left:224px;top:367px">absolute</div>
 <div class="a" style="left:224px;top:391px;width:41px;height:14px;background:#003eaa;border-radius:2px;color:#fff;font:11px/14px 'Liberation Mono',monospace;text-align:center">offset</div>
 <div class="m" style="left:271px;top:389px"><span class="b">div</span><span class="p">.post</span></div>
 <svg width="16" height="16" style="left:342px;top:390px" fill="none" stroke="#333" stroke-width="2"><rect x="3" y="3" width="10" height="10" rx="2"/><path d="M8 0V3M8 13V16M0 8H3M13 8H16"/></svg>
</div>
<div class="a" style="left:1520px;top:507px;width:20px;height:405px;background:#f0f0f0"></div>
<div class="a" style="left:1525px;top:637px;width:11px;height:221px;background:#888"></div>
</div></body></html>
